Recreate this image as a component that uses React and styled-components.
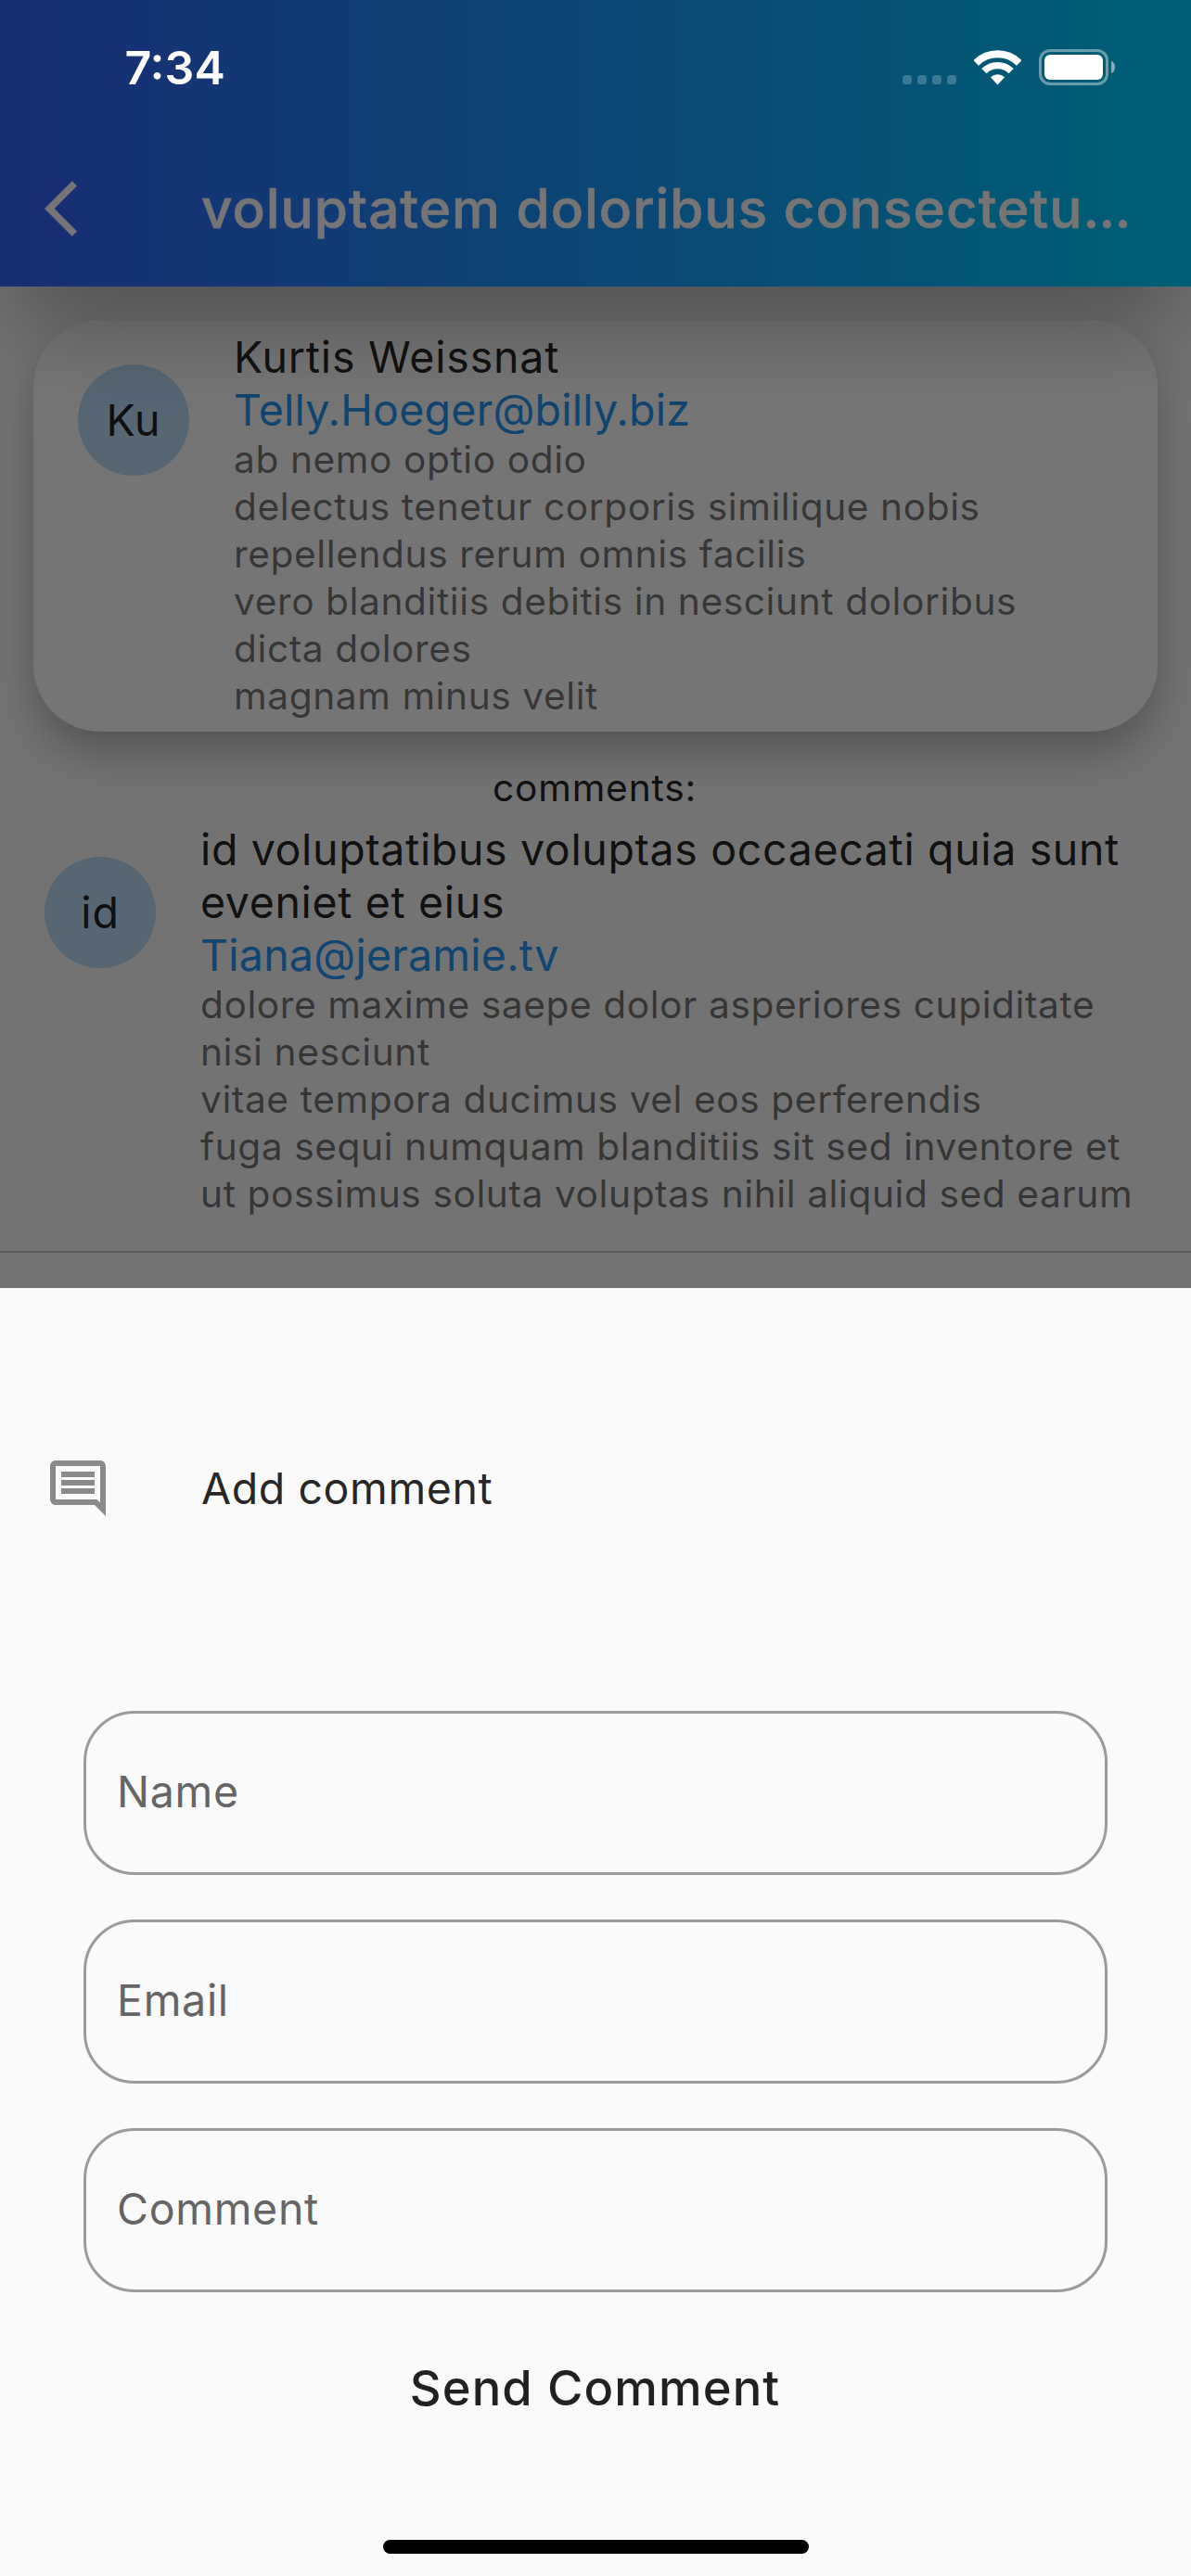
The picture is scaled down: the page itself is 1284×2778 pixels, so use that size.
import React from "react";
import styled, { createGlobalStyle } from "styled-components";

const GlobalStyle = createGlobalStyle`
  *, *::before, *::after { box-sizing: border-box; }
  body { margin: 0; background: #fafafa; }
`;

const Screen = styled.div`
  position: relative;
  width: 1284px;
  height: 2778px;
  overflow: hidden;
  background: #fafafa;
  color: rgba(0, 0, 0, 0.87);
  font-family: Inter, "Liberation Sans", sans-serif;
`;

/* ---------- post page ---------- */

const Page = styled.div`
  display: flex;
  flex-direction: column;
  height: 100%;
`;

const AppBar = styled.header`
  position: relative;
  z-index: 1;
  flex: none;
  display: flex;
  align-items: center;
  height: 309px;
  padding: 141px 48px 0;
  color: #fff;
  background: linear-gradient(90deg, #3462fc, #00cfff);
  box-shadow: 0 62px 96px -20px rgba(0, 0, 0, 0.29);
`;

const BackButton = styled.button`
  flex: none;
  display: flex;
  width: 169px;
  padding: 0;
  border: 0;
  background: none;
  color: inherit;
`;

const BarTitle = styled.h1`
  margin: 0;
  font-size: 58.5px;
  font-weight: 500;
  line-height: 72px;
  letter-spacing: 1px;
  white-space: nowrap;
  -webkit-text-stroke: 0.6px currentColor;
`;

const Ellipsis = styled.span`
  letter-spacing: -0.6px;
`;

const PostCard = styled.article`
  flex: none;
  margin: 36px 36px 35px;
  padding: 12px 48px 13px;
  border-radius: 72px;
  background: #fff;
  box-shadow: 0 24px 48px -4px rgba(0, 0, 0, 0.29);
`;

const Tile = styled.div`
  display: flex;
  align-items: flex-start;
  gap: 48px;
`;

const CommentItem = styled.article`
  padding: 0 48px 36px;
  border-bottom: 2px solid rgba(0, 0, 0, 0.2);
`;

const Avatar = styled.div`
  flex: none;
  display: flex;
  align-items: center;
  justify-content: center;
  width: 120px;
  height: 120px;
  margin-top: 36px;
  border-radius: 50%;
  background: #bbdefb;
  font-size: 46.5px;
  letter-spacing: 1px;
`;

const TileText = styled.div`
  flex: 1;
  min-width: 0;
`;

const TileTitle = styled.div`
  font-size: 46.5px;
  line-height: 57px;
  letter-spacing: ${(p) => p.$spacing}px;
  white-space: pre;
`;

const Email = styled.div`
  font-size: 46.5px;
  line-height: 56px;
  letter-spacing: 0.25px;
  color: #2196f3;
`;

const Body = styled.div`
  font-size: 40.7px;
  line-height: 51px;
  letter-spacing: 0.57px;
  color: rgba(0, 0, 0, 0.54);
  white-space: pre;
`;

const CommentsLabel = styled.div`
  padding: 0 2px 13px 0;
  font-size: 40.7px;
  line-height: 51px;
  letter-spacing: 0.8px;
  text-align: center;
`;

const Scrim = styled.div`
  position: absolute;
  inset: 0;
  z-index: 2;
  background: rgba(0, 0, 0, 0.54);
`;

/* ---------- status bar ---------- */

const StatusBar = styled.div`
  position: absolute;
  inset: 0 0 auto;
  z-index: 3;
  display: flex;
  align-items: center;
  justify-content: space-between;
  height: 145px;
  padding: 0 82px 0 134.5px;
  color: #fff;
`;

const Clock = styled.span`
  font-size: 50px;
  font-weight: 600;
`;

const StatusIcons = styled.div`
  display: flex;
  align-items: center;
  gap: 19px;
`;

const SignalDots = styled.div`
  display: flex;
  gap: 6px;
  margin-top: 27px;
`;

const Dot = styled.i`
  width: 10px;
  height: 10px;
  border-radius: 3px;
  background: rgba(255, 255, 255, 0.22);
`;

const Battery = styled.div`
  display: flex;
  align-items: center;
  gap: 3px;
`;

const BatteryBody = styled.div`
  width: 75px;
  height: 39px;
  padding: 3px;
  border: 3px solid rgba(255, 255, 255, 0.4);
  border-radius: 12px;
`;

const BatteryLevel = styled.div`
  height: 100%;
  border-radius: 6px;
  background: #fff;
`;

const BatteryCap = styled.div`
  width: 4px;
  height: 13px;
  border-radius: 0 4px 4px 0 / 0 6.5px 6.5px 0;
  background: rgba(255, 255, 255, 0.5);
`;

/* ---------- bottom sheet ---------- */

const Sheet = styled.section`
  position: absolute;
  inset: auto 0 0;
  z-index: 4;
  display: flex;
  flex-direction: column;
  align-items: center;
  height: 1389px;
  padding: 132px 90px 24px;
  background: #fafafa;
`;

const SheetHeader = styled.div`
  align-self: stretch;
  display: flex;
  align-items: center;
  gap: 97px;
  height: 168px;
  margin: 0 -42px 156px;
  font-size: 46.5px;
  letter-spacing: 0.59px;
`;

const Form = styled.form`
  align-self: stretch;
  display: flex;
  flex-direction: column;
  align-items: center;
  gap: 48px;
`;

const Field = styled.input`
  width: 100%;
  height: 177px;
  padding: 0 33px 3px;
  border: 3px solid #9b9b9b;
  border-radius: 55px;
  outline: none;
  background: transparent;
  font: 400 46.5px Inter, "Liberation Sans", sans-serif;
  letter-spacing: 0.7px;

  &::placeholder {
    color: #656565;
    opacity: 1;
  }
`;

const SendButton = styled.button`
  height: 144px;
  margin-top: -17px;
  padding: 0 49px 0 48px;
  border: 0;
  background: none;
  color: rgba(0, 0, 0, 0.87);
  font: 500 52.5px Inter, "Liberation Sans", sans-serif;
  letter-spacing: 1.08px;
`;

const HomeIndicator = styled.div`
  width: 459px;
  height: 15px;
  margin-top: auto;
  border-radius: 7.5px;
  background: #000;
`;

const BackIcon = () => (
  <svg width="72" height="72" viewBox="0 0 24 24" fill="currentColor">
    <path d="M11.67 3.87 9.9 2.1 0 12l9.9 9.9 1.77-1.77L3.54 12z" />
  </svg>
);

const WifiIcon = () => (
  <svg width="51" height="38" viewBox="0 0 51 38" fill="none" stroke="currentColor">
    <path d="M2.2 14a33 33 0 0 1 46.6 0" strokeWidth="8" />
    <path d="M10.9 22.7a20.6 20.6 0 0 1 29.2 0" strokeWidth="7.4" />
    <path d="M25.5 37.4l-7.6-8.2a11.3 11.3 0 0 1 15.2 0z" fill="currentColor" stroke="none" />
  </svg>
);

const CommentIcon = () => (
  <svg width="72" height="72" viewBox="0 0 24 24" fill="#8a8a8a">
    <path d="M21.99 4c0-1.1-.89-2-1.99-2H4c-1.1 0-2 .9-2 2v12c0 1.1.9 2 2 2h14l4 4-.01-18zM20 4v13.17L18.83 16H4V4h16zM6 12h12v2H6zm0-3h12v2H6zm0-3h12v2H6z" />
  </svg>
);

const post = {
  initials: "Ku",
  title: "Kurtis Weissnat",
  email: "Telly.Hoeger@billy.biz",
  body: `ab nemo optio odio
delectus tenetur corporis similique nobis
repellendus rerum omnis facilis
vero blanditiis debitis in nesciunt doloribus
dicta dolores
magnam minus velit`,
};

const comment = {
  initials: "id",
  title: `id voluptatibus voluptas occaecati quia sunt
eveniet et eius`,
  email: "Tiana@jeramie.tv",
  body: `dolore maxime saepe dolor asperiores cupiditate
nisi nesciunt
vitae tempora ducimus vel eos perferendis
fuga sequi numquam blanditiis sit sed inventore et
ut possimus soluta voluptas nihil aliquid sed earum`,
};

const Entry = ({ entry, spacing }) => (
  <Tile>
    <Avatar>{entry.initials}</Avatar>
    <TileText>
      <TileTitle $spacing={spacing}>{entry.title}</TileTitle>
      <Email>{entry.email}</Email>
      <Body>{entry.body}</Body>
    </TileText>
  </Tile>
);

export default function App() {
  return (
    <Screen>
      <GlobalStyle />
      <Page>
        <AppBar>
          <BackButton aria-label="Back">
            <BackIcon />
          </BackButton>
          <BarTitle>
            voluptatem doloribus consectetu<Ellipsis>...</Ellipsis>
          </BarTitle>
        </AppBar>
        <PostCard>
          <Entry entry={post} spacing={0.8} />
        </PostCard>
        <CommentsLabel>comments:</CommentsLabel>
        <CommentItem>
          <Entry entry={comment} spacing={0.64} />
        </CommentItem>
      </Page>
      <Scrim />
      <StatusBar>
        <Clock>7:34</Clock>
        <StatusIcons>
          <SignalDots>
            <Dot />
            <Dot />
            <Dot />
            <Dot />
          </SignalDots>
          <WifiIcon />
          <Battery>
            <BatteryBody>
              <BatteryLevel />
            </BatteryBody>
            <BatteryCap />
          </Battery>
        </StatusIcons>
      </StatusBar>
      <Sheet>
        <SheetHeader>
          <CommentIcon />
          <span>Add comment</span>
        </SheetHeader>
        <Form>
          <Field placeholder="Name" />
          <Field placeholder="Email" />
          <Field placeholder="Comment" />
          <SendButton type="button">Send Comment</SendButton>
        </Form>
        <HomeIndicator />
      </Sheet>
    </Screen>
  );
}
